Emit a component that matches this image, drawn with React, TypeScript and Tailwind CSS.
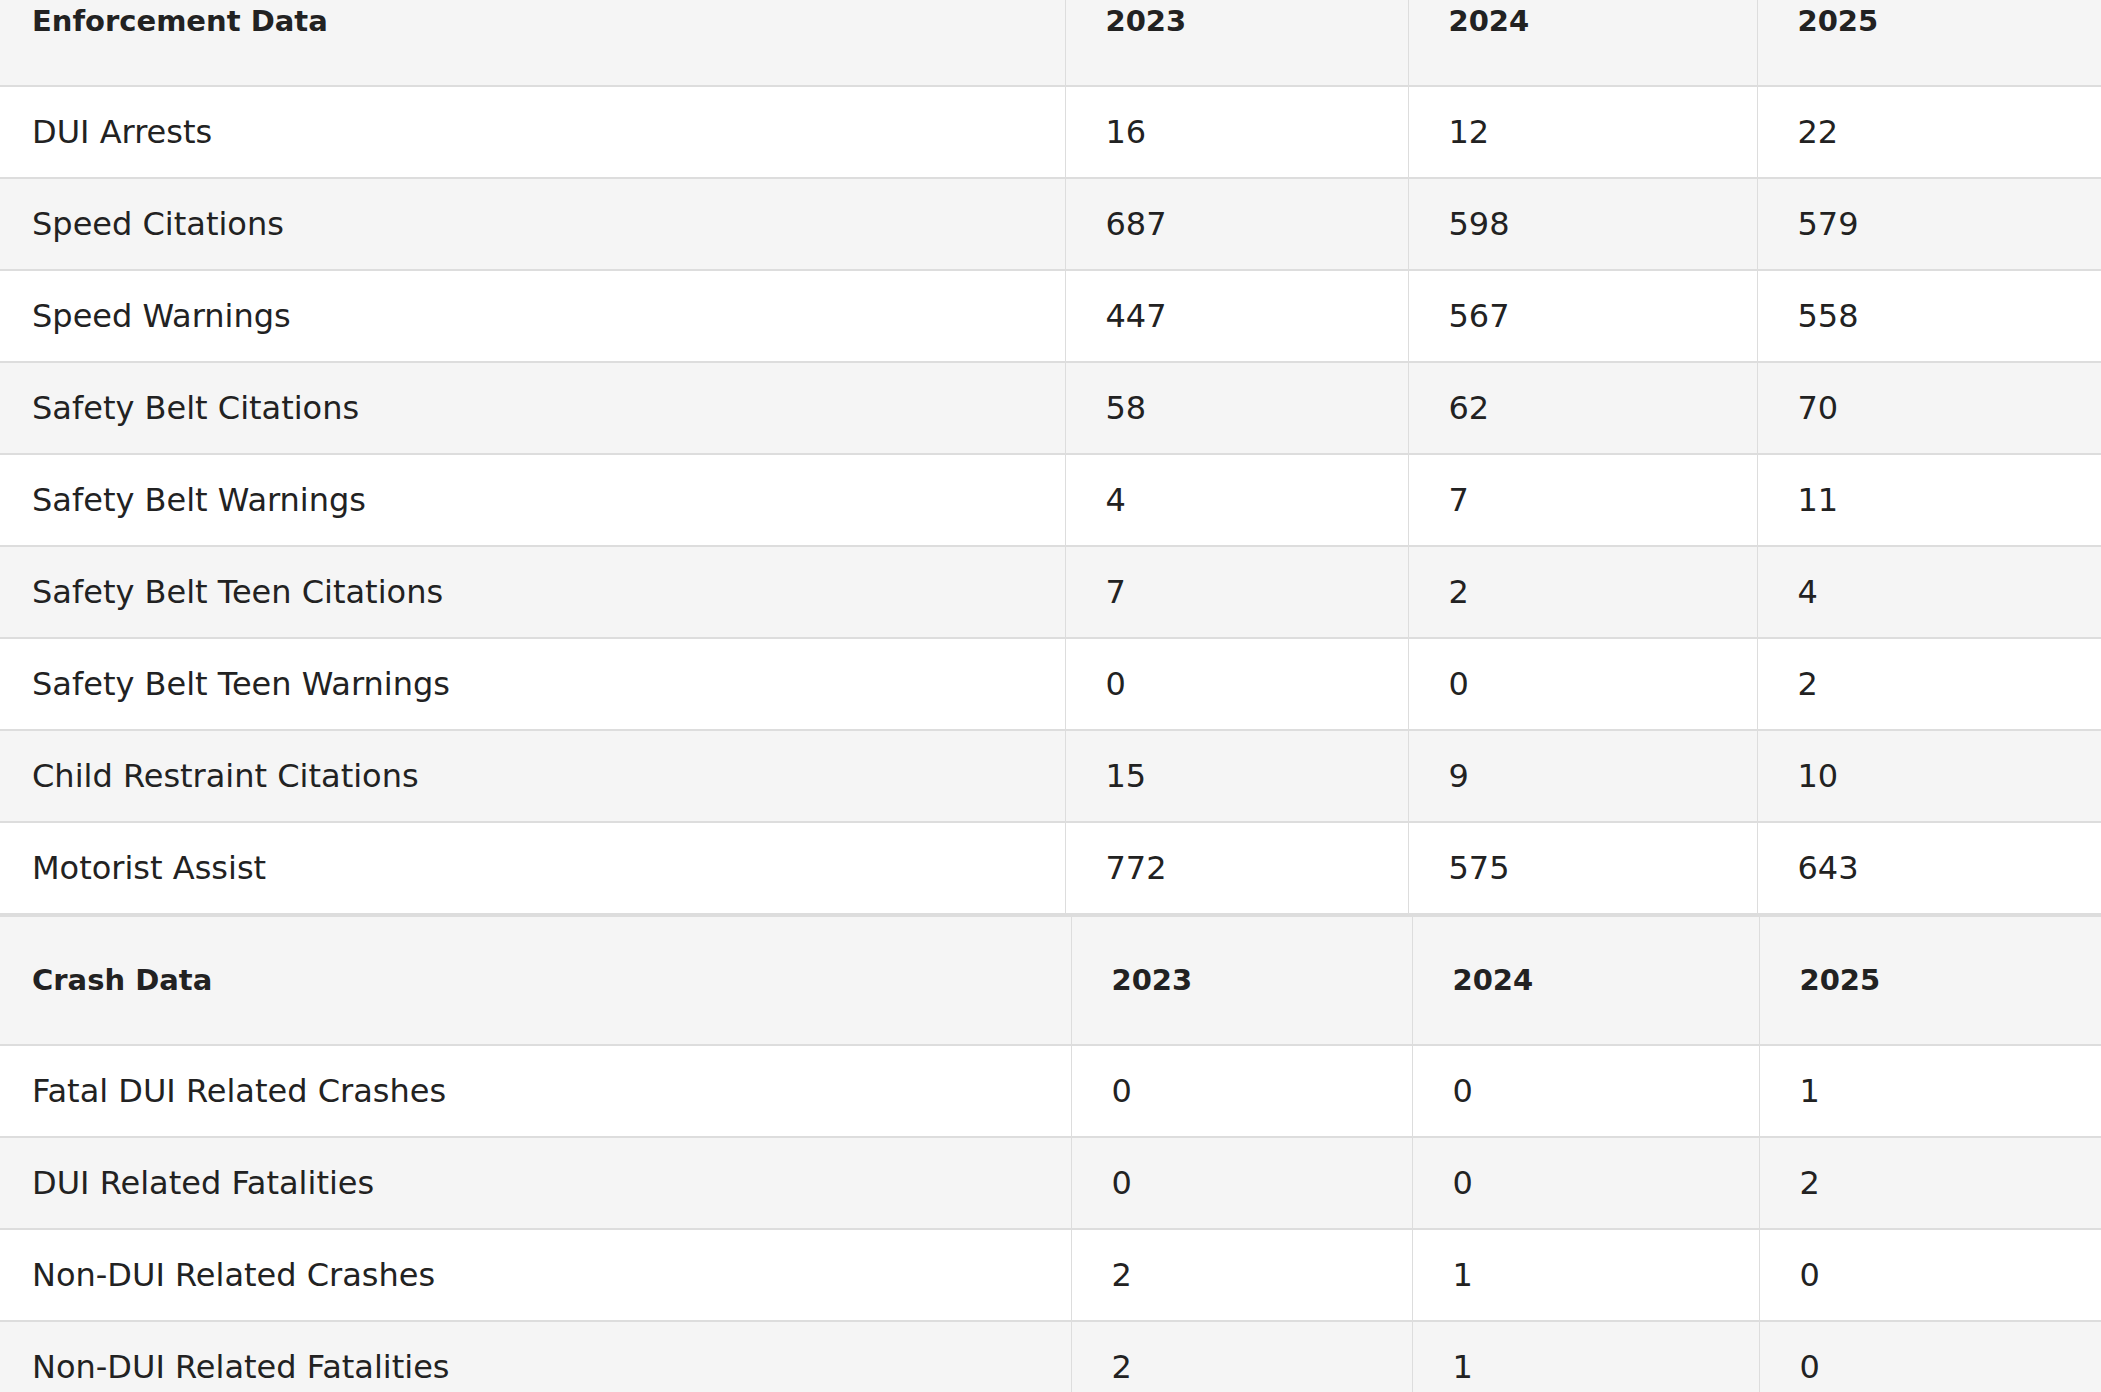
const enforcement: [string, string, string, string][] = [
  ["DUI Arrests", "16", "12", "22"],
  ["Speed Citations", "687", "598", "579"],
  ["Speed Warnings", "447", "567", "558"],
  ["Safety Belt Citations", "58", "62", "70"],
  ["Safety Belt Warnings", "4", "7", "11"],
  ["Safety Belt Teen Citations", "7", "2", "4"],
  ["Safety Belt Teen Warnings", "0", "0", "2"],
  ["Child Restraint Citations", "15", "9", "10"],
  ["Motorist Assist", "772", "575", "643"],
];

const crashes: [string, string, string, string][] = [
  ["Fatal DUI Related Crashes", "0", "0", "1"],
  ["DUI Related Fatalities", "0", "0", "2"],
  ["Non-DUI Related Crashes", "2", "1", "0"],
  ["Non-DUI Related Fatalities", "2", "1", "0"],
];

function DataTable({
  title,
  rows,
  widths,
}: {
  title: string;
  rows: [string, string, string, string][];
  widths: [string, string, string];
}) {
  return (
    <table className="w-full table-fixed border-collapse">
      <colgroup>
        <col className={widths[0]} />
        <col className={widths[1]} />
        <col className={widths[2]} />
        <col />
      </colgroup>
      <thead>
        <tr className="h-[129px] border-y-2 border-[#dddddd] bg-[#f5f5f5] text-[29px]">
          <th className="pl-[32px] text-left font-bold">{title}</th>
          <th className="border-l border-[#dddddd] pl-[40px] text-left font-bold">2023</th>
          <th className="border-l border-[#dddddd] pl-[40px] text-left font-bold">2024</th>
          <th className="border-l border-[#dddddd] pl-[40px] text-left font-bold">2025</th>
        </tr>
      </thead>
      <tbody>
        {rows.map((r, i) => (
          <tr
            key={r[0]}
            className={`h-[92px] border-b-2 border-[#dddddd] ${i % 2 === 0 ? "bg-white" : "bg-[#f5f5f5]"}`}
          >
            <td className="pl-[32px]">{r[0]}</td>
            <td className="border-l border-[#dddddd] pl-[40px]">{r[1]}</td>
            <td className="border-l border-[#dddddd] pl-[40px]">{r[2]}</td>
            <td className="border-l border-[#dddddd] pl-[40px]">{r[3]}</td>
          </tr>
        ))}
      </tbody>
    </table>
  );
}

export default function App() {
  return (
    <div className="min-h-screen overflow-hidden bg-white font-['DejaVu_Sans',sans-serif] text-[32px] text-[#222222]">
      <div className="-mt-[44px]">
        <DataTable title="Enforcement Data" rows={enforcement} widths={["w-[1065px]", "w-[343px]", "w-[349px]"]} />
        <DataTable title="Crash Data" rows={crashes} widths={["w-[1071px]", "w-[341px]", "w-[347px]"]} />
      </div>
    </div>
  );
}
